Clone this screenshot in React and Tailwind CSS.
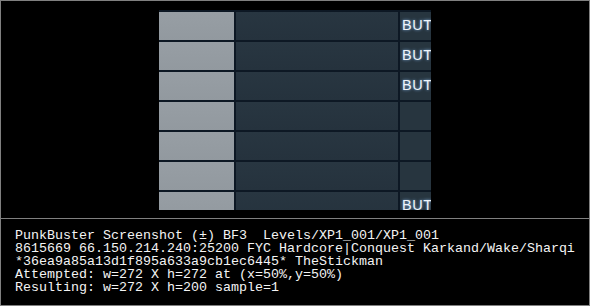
const rows = [true, true, true, false, false, false, true];

const infoLines = [
  "PunkBuster Screenshot (±) BF3  Levels/XP1_001/XP1_001",
  "8615669 66.150.214.240:25200 FYC Hardcore|Conquest Karkand/Wake/Sharqi",
  "*36ea9a85a13d1f895a633a9cb1ec6445* TheStickman",
  "Attempted: w=272 X h=272 at (x=50%,y=50%)",
  "Resulting: w=272 X h=200 sample=1",
];

const Row = ({ button }) => (
  <div className="flex h-[28px] shrink-0 gap-[2px]">
    <div className="w-[75px] bg-gradient-to-b from-[#979ea4] to-[#92999f]" />
    <div className="w-[162px] bg-gradient-to-b from-[#283641] to-[#25323d]" />
    <div className="flex w-[31px] items-center overflow-hidden bg-[#27353f] pl-[2px]">
      {button && (
        <span className="font-['Liberation_Sans',sans-serif] text-[14.5px] leading-none tracking-[0.5px] text-[#eef4fa] [text-shadow:0_0_3px_rgba(150,200,255,0.9)]">
          BUT
        </span>
      )}
    </div>
  </div>
);

export default function App() {
  return (
    <div className="flex h-[306px] w-[590px] flex-col border border-[#808080] bg-black">
      {/* screenshot area */}
      <div className="flex h-[218px] shrink-0 items-center justify-center border-b border-[#808080]">
        <div className="flex h-[200px] w-[272px] flex-col gap-[2px] overflow-hidden bg-[#0d1824] pt-[2px]">
          {rows.map((b, i) => (
            <Row key={i} button={b} />
          ))}
        </div>
      </div>

      {/* info text */}
      <div className="pl-[14px] pt-[10px] font-['Liberation_Mono',monospace] text-[13.33px] leading-[13px] whitespace-pre text-[#f4f4f4]">
        {infoLines.map((l, i) => (
          <div key={i}>{l}</div>
        ))}
      </div>
    </div>
  );
}
